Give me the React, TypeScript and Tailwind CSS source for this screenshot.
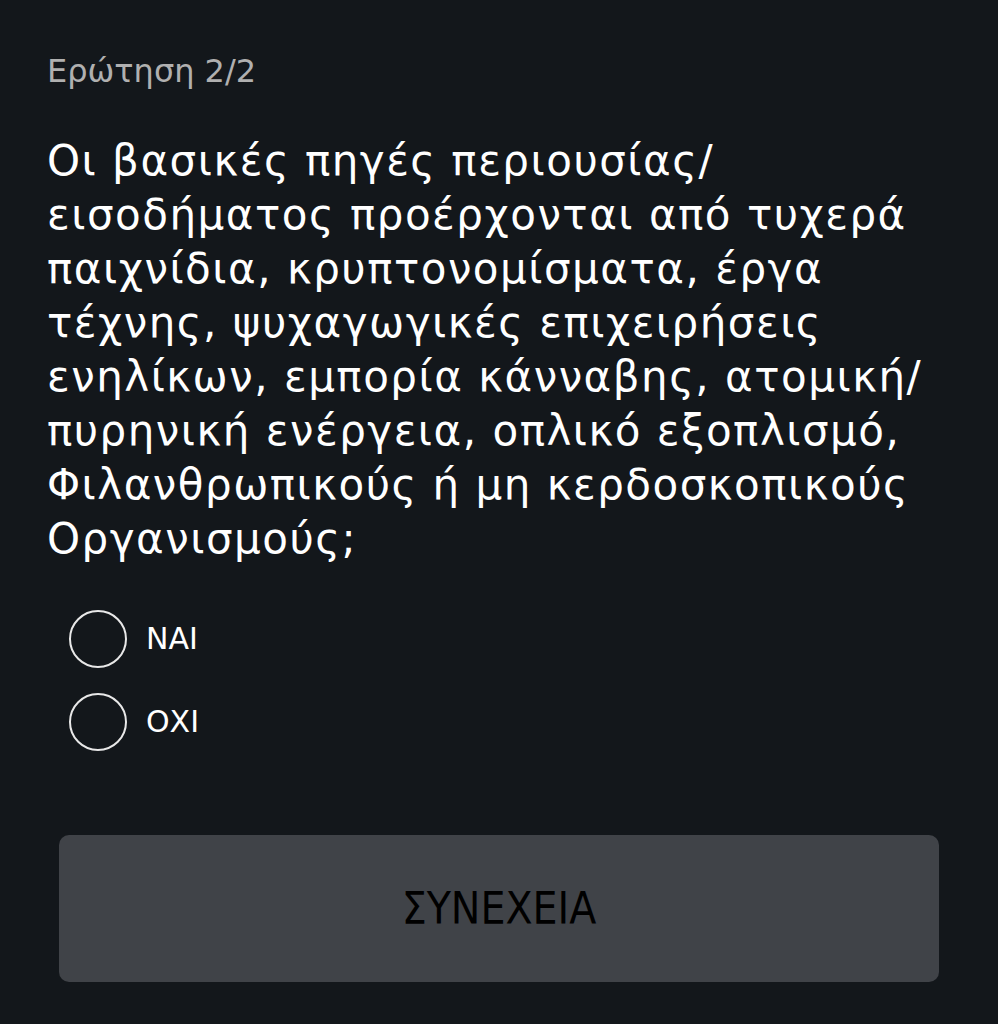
import React, { useState } from "react";

const lines = [
  "Οι βασικές πηγές περιουσίας/",
  "εισοδήματος προέρχονται από τυχερά",
  "παιχνίδια, κρυπτονομίσματα, έργα",
  "τέχνης, ψυχαγωγικές επιχειρήσεις",
  "ενηλίκων, εμπορία κάνναβης, ατομική/",
  "πυρηνική ενέργεια, οπλικό εξοπλισμό,",
  "Φιλανθρωπικούς ή μη κερδοσκοπικούς",
  "Οργανισμούς;",
];

const options = ["ΝΑΙ", "ΟΧΙ"];

export default function App() {
  const [picked, setPicked] = useState<string | null>(null);

  return (
    <div
      className="min-h-screen w-full bg-[#13171b] text-white"
      style={{ fontFamily: '"DejaVu Sans", "Noto Sans", sans-serif' }}
    >
      <div className="px-[47px] pt-[51px]">
        <p className="text-[32px] leading-[40px] text-[#b0b0b0]">Ερώτηση 2/2</p>

        <h1 className="mt-[43px] text-[42px] leading-[54px] tracking-[1.5px] font-normal">
          {lines.map((l, i) => (
            <span key={i} className="block whitespace-nowrap">
              {l}
            </span>
          ))}
        </h1>

        <div className="mt-[44px] flex flex-col gap-[25px] pl-[22px]">
          {options.map((o) => (
            <label
              key={o}
              className="flex cursor-pointer items-center gap-[19px]"
              onClick={() => setPicked(o)}
            >
              <span className="flex h-[58px] w-[58px] items-center justify-center rounded-full border-2 border-[#e8e8e8]">
                {picked === o && (
                  <span className="h-[30px] w-[30px] rounded-full bg-white" />
                )}
              </span>
              <span className="text-[30px] leading-[36px]">{o}</span>
            </label>
          ))}
        </div>
      </div>

      <div className="px-[59px] pb-[41px] pt-[84px]">
        <button
          className="flex h-[147px] w-full items-center justify-center rounded-[10px] bg-[#404348] text-[44px] text-black"
          style={{ fontFamily: '"DejaVu Sans Condensed", "DejaVu Sans", sans-serif', fontStretch: "condensed" }}
        >
          ΣΥΝΕΧΕΙΑ
        </button>
      </div>
    </div>
  );
}
